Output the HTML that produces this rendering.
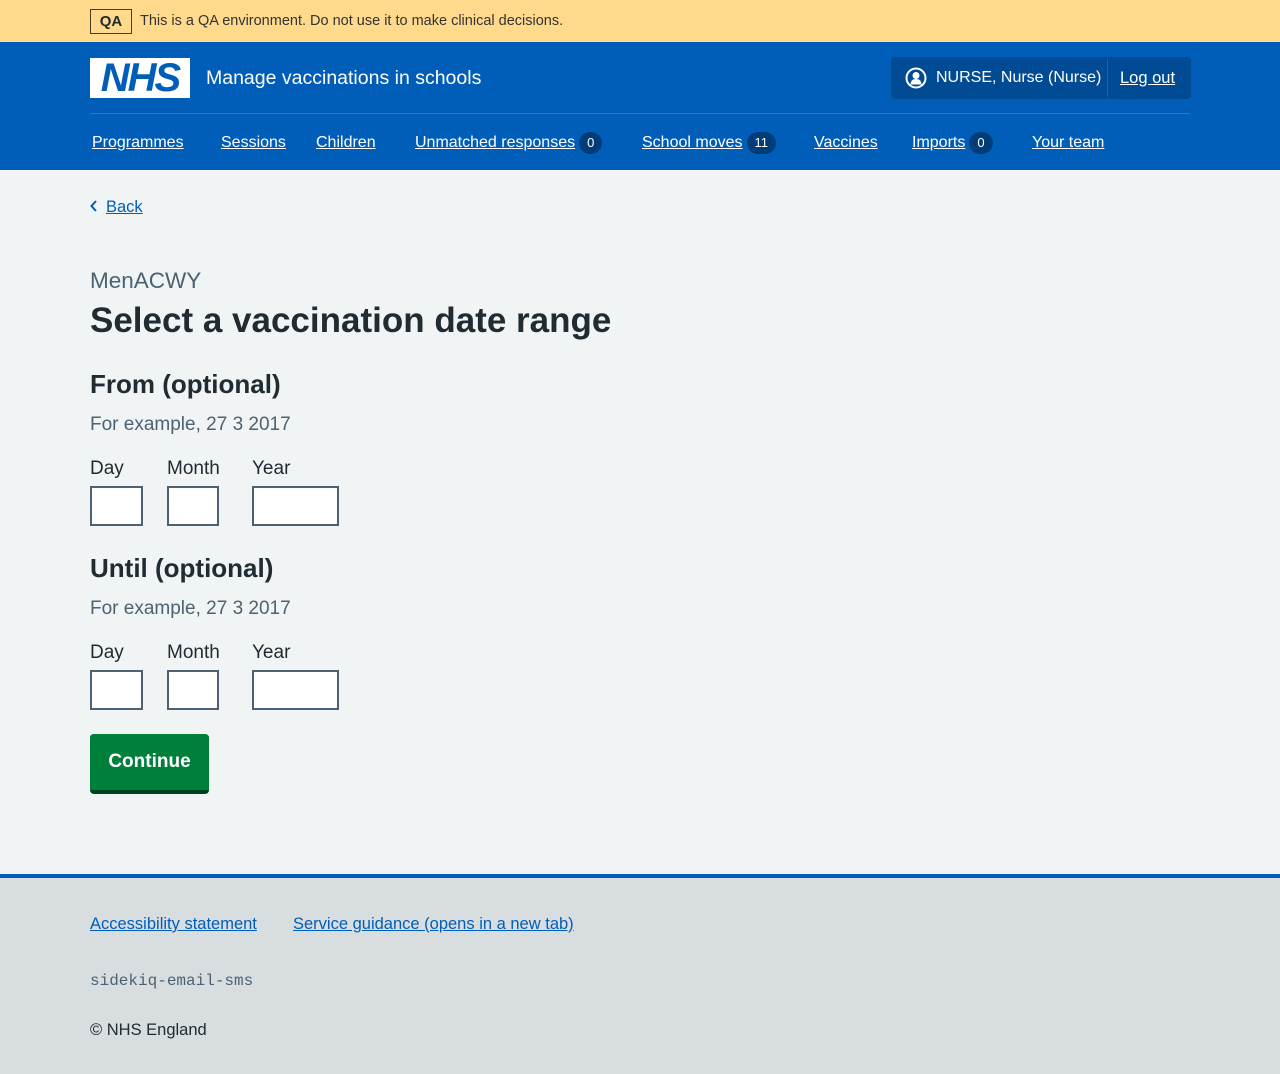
<!DOCTYPE html>
<html><head><meta charset="utf-8"><style>
*{box-sizing:border-box;margin:0;padding:0}
body{width:1280px;height:1074px;position:relative;background:#f0f4f5;font-family:"Liberation Sans",Arial,sans-serif;color:#212b32;overflow:hidden}
.a{position:absolute;white-space:nowrap}
.banner{left:0;top:0;width:1280px;height:42px;background:#ffda8c}
.hdr{left:0;top:42px;width:1280px;height:128px;background:#005eb8}
.nav{height:22px;line-height:22px;top:132px}
.nav a{color:#fff;text-decoration:underline;font-size:16px;vertical-align:top}
.badge{display:inline-block;background:#003d78;color:#fff;border-radius:11px;font-size:13px;height:22px;line-height:22px;padding:0 8px;margin-left:4px;vertical-align:top}
.box{border:2px solid #4c6272;background:#fff;height:40px}
.lbl{font-size:19px}
.hint{font-size:19px;color:#4c6272}
.h2{font-size:26px;font-weight:bold}
.foot a{color:#005eb8;text-decoration:underline;font-size:16.5px}
</style></head><body>
<div class="a banner"></div>
<div class="a" style="left:90px;top:9px;width:42px;height:25px;border:1px solid #4d3d1c;font-weight:bold;font-size:15px;text-align:center;line-height:23px">QA</div>
<div class="a" style="left:140px;top:13px;font-size:14.5px;color:#333">This is a QA environment. Do not use it to make clinical decisions.</div>
<div class="a hdr"></div>
<div class="a" style="left:90px;top:58px;width:100px;height:40px;background:#fff;color:#005eb8;font-weight:bold;font-style:italic;font-size:40px;line-height:40px;text-align:center;letter-spacing:-2px">NHS</div>
<div class="a" style="left:206px;top:67px;color:#fff;font-size:19.5px">Manage vaccinations in schools</div>
<div class="a" style="left:891px;top:57px;width:300px;height:42px;background:#004b93;border-radius:4px"></div>
<div class="a" style="left:1107px;top:59px;width:1px;height:38px;background:#1f5fa3"></div>
<svg class="a" style="left:905px;top:67px" width="22" height="22" viewBox="0 0 22 22"><circle cx="11" cy="11" r="9.5" fill="none" stroke="#fff" stroke-width="2"/><circle cx="11" cy="8.5" r="3.5" fill="#fff"/><path d="M5.5 17.5c0-4 2.5-5.5 5.5-5.5s5.5 1.5 5.5 5.5z" fill="#fff"/></svg>
<div class="a" style="left:936px;top:69px;color:#fff;font-size:16px">NURSE, Nurse (Nurse)</div>
<div class="a" style="left:1120px;top:69px;color:#fff;font-size:16.5px;text-decoration:underline">Log out</div>
<div class="a" style="left:90px;top:113px;width:1100px;height:1px;background:#2a78c6"></div>
<div class="a nav" style="left:92px"><a>Programmes</a></div>
<div class="a nav" style="left:221px"><a>Sessions</a></div>
<div class="a nav" style="left:316px"><a>Children</a></div>
<div class="a nav" style="left:415px"><a>Unmatched responses</a><span class="badge">0</span></div>
<div class="a nav" style="left:642px"><a>School moves</a><span class="badge">11</span></div>
<div class="a nav" style="left:814px"><a>Vaccines</a></div>
<div class="a nav" style="left:912px"><a>Imports</a><span class="badge">0</span></div>
<div class="a nav" style="left:1032px"><a>Your team</a></div>
<svg class="a" style="left:89px;top:199px" width="10" height="14" viewBox="0 0 10 14"><path d="M7 2L2.5 7 7 12" fill="none" stroke="#005eb8" stroke-width="2"/></svg>
<div class="a" style="left:106px;top:198px;color:#005eb8;font-size:16.5px;text-decoration:underline">Back</div>
<div class="a" style="left:90px;top:268px;color:#4c6272;font-size:22.5px">MenACWY</div>
<div class="a" style="left:90px;top:301px;font-size:35px;font-weight:bold">Select a vaccination date range</div>
<div class="a h2" style="left:90px;top:369px">From (optional)</div>
<div class="a hint" style="left:90px;top:414px">For example, 27 3 2017</div>
<div class="a lbl" style="left:90px;top:458px">Day</div>
<div class="a lbl" style="left:167px;top:458px">Month</div>
<div class="a lbl" style="left:252px;top:458px">Year</div>
<div class="a box" style="left:90px;top:486px;width:53px"></div>
<div class="a box" style="left:167px;top:486px;width:52px"></div>
<div class="a box" style="left:252px;top:486px;width:87px"></div>
<div class="a h2" style="left:90px;top:553px">Until (optional)</div>
<div class="a hint" style="left:90px;top:598px">For example, 27 3 2017</div>
<div class="a lbl" style="left:90px;top:642px">Day</div>
<div class="a lbl" style="left:167px;top:642px">Month</div>
<div class="a lbl" style="left:252px;top:642px">Year</div>
<div class="a box" style="left:90px;top:670px;width:53px"></div>
<div class="a box" style="left:167px;top:670px;width:52px"></div>
<div class="a box" style="left:252px;top:670px;width:87px"></div>
<div class="a" style="left:90px;top:734px;width:119px;height:60px;background:#00401e;border-radius:4px"></div>
<div class="a" style="left:90px;top:734px;width:119px;height:56px;background:#007f3b;border-radius:4px 4px 0 0;color:#fff;font-weight:bold;font-size:19px;text-align:center;line-height:56px">Continue</div>
<div class="a" style="left:0;top:874px;width:1280px;height:200px;background:#d8dde0;border-top:4px solid #005eb8"></div>
<div class="a foot" style="left:90px;top:915px"><a>Accessibility statement</a></div>
<div class="a foot" style="left:293px;top:915px"><a>Service guidance (opens in a new tab)</a></div>
<div class="a" style="left:90px;top:972px;font-family:'Liberation Mono',monospace;font-size:16px;color:#4c6272">sidekiq-email-sms</div>
<div class="a" style="left:90px;top:1021px;font-size:16.5px">© NHS England</div>
</body></html>
